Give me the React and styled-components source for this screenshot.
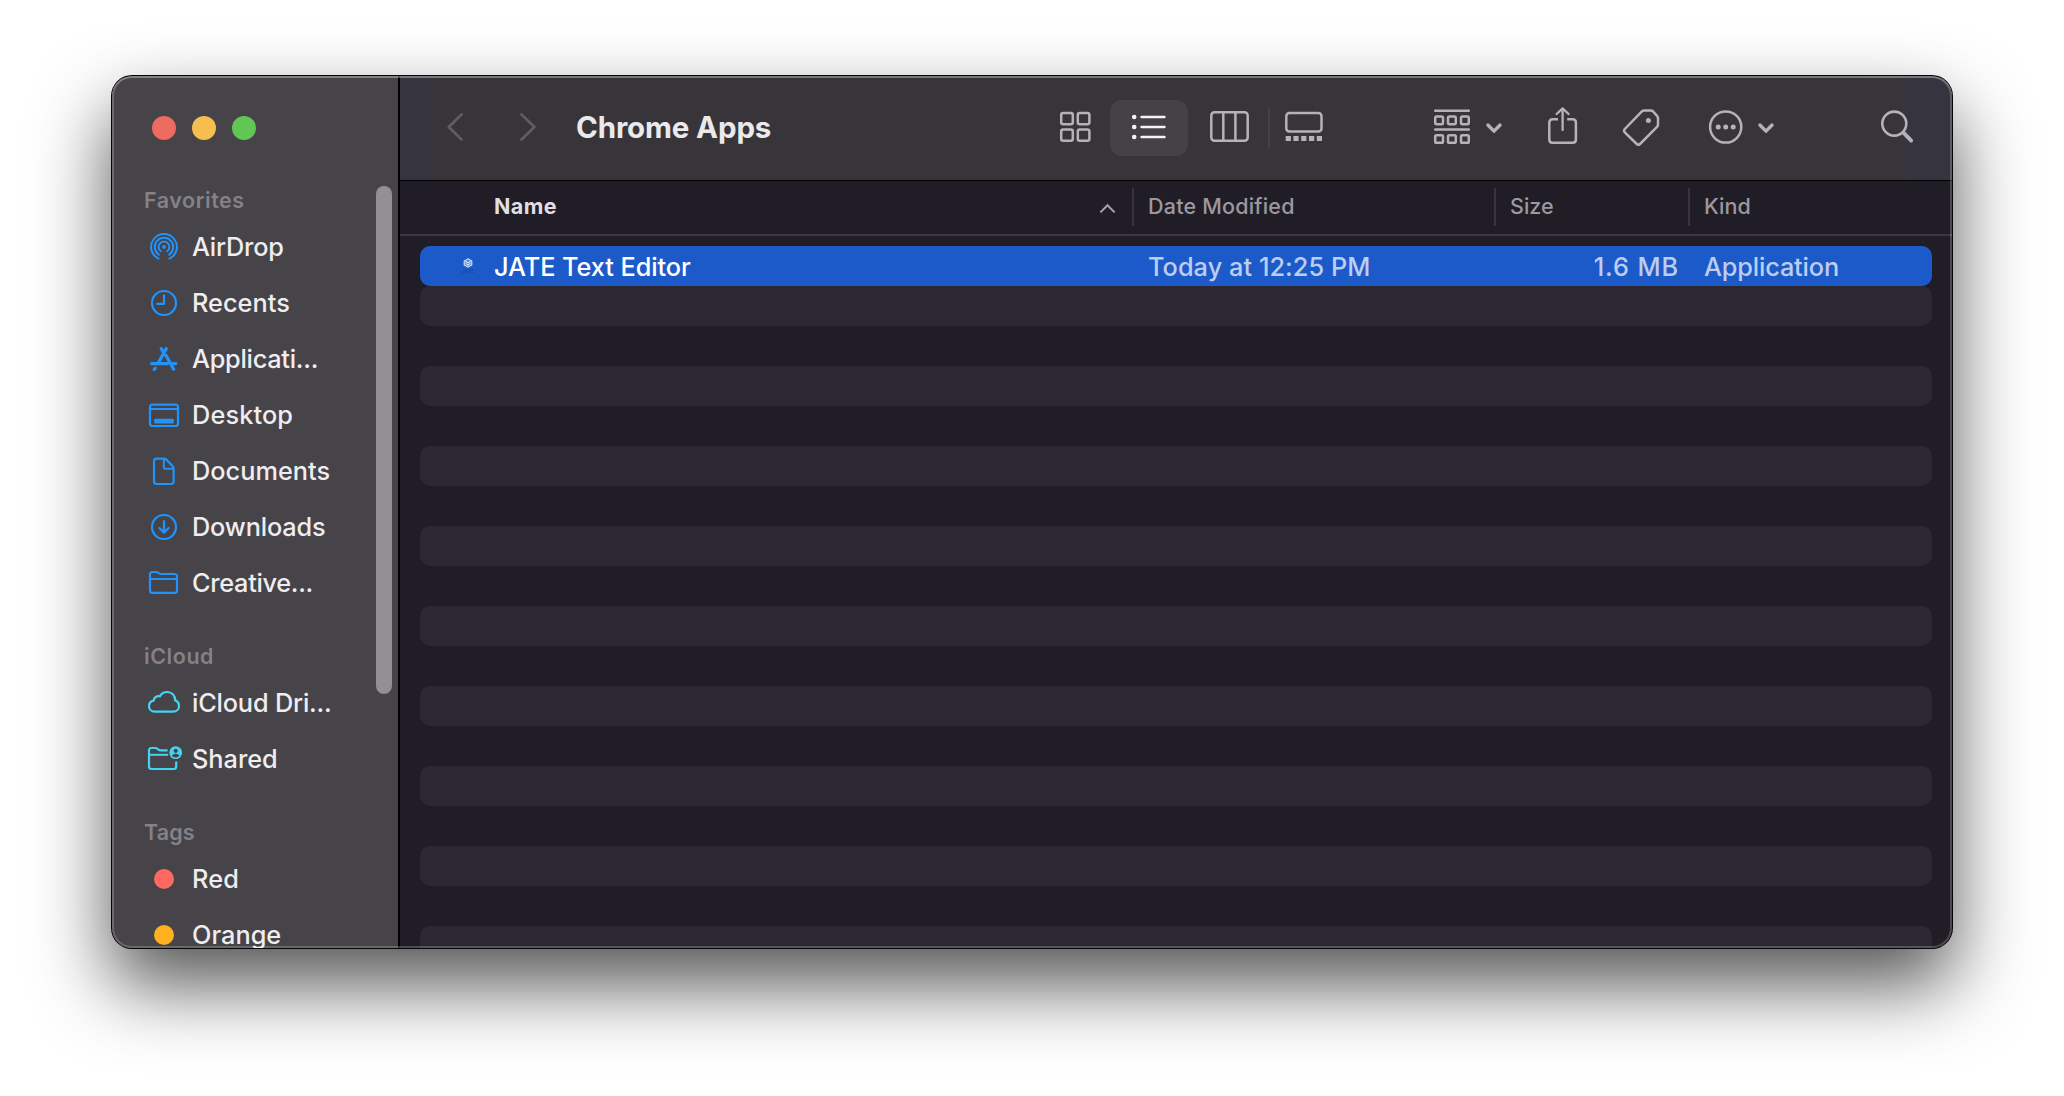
import React from 'react';
import styled, { createGlobalStyle, css } from 'styled-components';

const GlobalStyle = createGlobalStyle`
  * { box-sizing: border-box; }
  body {
    margin: 0;
    background: #fff;
    font-family: Inter, "Liberation Sans", sans-serif;
    overflow: hidden;
  }
`;

const Backdrop = styled.div`
  width: 2064px;
  height: 1096px;
  padding: 76px 112px;
  background: #fff;
`;

const Window = styled.div`
  position: relative;
  display: flex;
  width: 1840px;
  height: 872px;
  border-radius: 20px;
  background: #211d27;
  box-shadow: 0 0 0 1px #050505, 0 36px 76px 1px rgba(0, 0, 0, 0.67);

  &::after {
    content: '';
    position: absolute;
    inset: 0;
    border-radius: inherit;
    box-shadow: inset 0 0 0 2px rgba(255, 255, 255, 0.2), inset 0 2px 0 rgba(255, 255, 255, 0.17);
    pointer-events: none;
  }
`;

const Sidebar = styled.aside`
  position: relative;
  width: 288px;
  flex: none;
  overflow: hidden;
  background: #464349;
  border-right: 2px solid #000;
  border-radius: 20px 0 0 20px;
`;

const TrafficLights = styled.div`
  display: flex;
  gap: 16px;
  height: 105px;
  padding: 40px 0 0 40px;
`;

const Light = styled.span`
  width: 24px;
  height: 24px;
  border-radius: 50%;
  background: ${(p) => p.$color};
`;

const Section = styled.section`
  margin-bottom: 26px;
`;

const SectionTitle = styled.h2`
  margin: 0;
  padding-left: 32px;
  font-size: 21.5px;
  font-weight: 600;
  line-height: 38px;
  letter-spacing: ${(p) => p.$tracking}px;
  color: #848187;
`;

const Item = styled.div`
  display: flex;
  align-items: center;
  gap: 10px;
  height: 56px;
  padding-left: 34px;
  font-size: 25.3px;
  font-weight: 500;
  letter-spacing: ${(p) => p.$tracking}px;
  color: #eeedef;
  white-space: nowrap;
`;

const Label = styled.span`
  padding-bottom: 2px;
`;

const ItemIcon = styled.svg`
  width: 36px;
  height: 36px;
  flex: none;
  overflow: visible;
  fill: none;
  stroke: ${(p) => p.$color};
  stroke-width: 2.2;
  stroke-linecap: round;
  stroke-linejoin: round;
  color: ${(p) => p.$color};
`;

const TagDot = styled.span`
  width: 20px;
  height: 20px;
  margin: 0 8px;
  border-radius: 50%;
  background: ${(p) => p.$color};
`;

const ScrollThumb = styled.div`
  position: absolute;
  top: 110px;
  right: 6px;
  width: 16px;
  height: 508px;
  border-radius: 8px;
  background: #928f95;
`;

const Main = styled.main`
  display: flex;
  flex-direction: column;
  flex: 1;
  overflow: hidden;
  border-radius: 0 20px 20px 0;
`;

const Toolbar = styled.header`
  display: flex;
  align-items: center;
  flex: none;
  height: 105px;
  padding: 0 39px 2px 47px;
  border-bottom: 1px solid #000;
  background: linear-gradient(90deg, #36343e 0, #36343e 31px, #38353a 33px, #38353a 1504px, #36343e 1506px);
`;

const Title = styled.h1`
  flex: 1;
  margin: 0 0 0 40px;
  font-size: 29.5px;
  font-weight: 650;
  line-height: 40px;
  letter-spacing: -0.14px;
  color: #eae9eb;
`;

const ToolIcon = styled.svg`
  width: ${(p) => p.$w}px;
  height: 40px;
  flex: none;
  margin-left: ${(p) => p.$gap || 0}px;
  overflow: visible;
  fill: none;
  stroke: ${(p) => p.$color || '#b6b3b8'};
  stroke-width: 2.5;
  stroke-linecap: round;
  stroke-linejoin: round;
  color: ${(p) => p.$color || '#b6b3b8'};
`;

const ActiveView = styled.div`
  display: flex;
  align-items: center;
  width: 78px;
  height: 56px;
  margin: 2px 0 0 19px;
  padding: 0 0 2px 22px;
  border-radius: 12px;
  background: #454247;
`;

const ToolDivider = styled.span`
  width: 2px;
  height: 40px;
  margin: 2px 0 0 18px;
  background: #454247;
`;

const columns = css`
  display: grid;
  grid-template-columns: ${(p) => (p.$inset ? 712 : 732)}px 362px 194px 1fr;
`;

const ListHeader = styled.div`
  ${columns}
  flex: none;
  height: 55px;
  padding-top: 7px;
  border-bottom: 2px solid #3a3740;
`;

const HeaderCell = styled.div`
  display: flex;
  align-items: center;
  justify-content: space-between;
  height: 38px;
  padding: 0 17px 2px ${(p) => (p.$main ? 94 : 14)}px;
  border-left: ${(p) => (p.$main ? 0 : 2)}px solid #38353c;
  font-size: 21.5px;
  font-weight: ${(p) => (p.$main ? 650 : 500)};
  letter-spacing: ${(p) => p.$tracking || 0}px;
  color: ${(p) => (p.$main ? '#e0dfe1' : '#9b999e')};
`;

const SortCaret = styled.svg`
  width: 15px;
  height: 9px;
  margin-top: 4px;
  overflow: visible;
  fill: none;
  stroke: #a7a4a9;
  stroke-width: 2;
`;

const Rows = styled.div`
  flex: 1;
  padding: 10px 20px 0;
  overflow: hidden;
`;

const Row = styled.div`
  ${columns}
  align-items: center;
  height: 40px;
  border-radius: 10px;
  background: ${(p) => (p.$selected ? '#1d5ac9' : p.$striped ? '#2c2832' : 'transparent')};
  font-size: 25.3px;
  font-weight: 500;
  color: #bccdf0;
`;

const NameCell = styled.div`
  display: flex;
  align-items: center;
  gap: 19px;
  padding-left: 41px;
  letter-spacing: -0.06px;
  color: #fff;
`;

const Cell = styled.div`
  padding: 0 ${(p) => (p.$right ? 9 : 0)}px 0 16px;
  text-align: ${(p) => (p.$right ? 'right' : 'left')};
  letter-spacing: ${(p) => p.$tracking}px;
`;

const AppBadge = styled.div`
  display: flex;
  flex-direction: column;
  align-items: center;
  width: 14px;
  gap: 2px;
  font-size: 4.5px;
  font-weight: 500;
  line-height: 4px;
  letter-spacing: 0.6px;
  color: #1c3f8c;
`;

const AppLogo = styled.svg`
  width: 10px;
  height: 10px;
  fill: #4f7fd8;
  stroke: #d6e3fa;
  stroke-width: 1.1;
`;

const BLUE = '#2094fa';
const CYAN = '#41d5f2';

const glyphs = {
  airdrop: (
    <g strokeWidth="2">
      <path d="M-5.4 11.7A12.9 12.9 0 1 1 5.4 11.7" />
      <path d="M-5.2 7.6A9.2 9.2 0 1 1 5.2 7.6" />
      <path d="M-3.2 4.3A5.4 5.4 0 1 1 3.2 4.3" />
      <circle r="1.9" fill="currentColor" stroke="none" />
    </g>
  ),
  recents: (
    <g>
      <circle r="12" />
      <path d="M0 -7.7V.8H-6.8" />
    </g>
  ),
  applications: (
    <g strokeWidth="3.2">
      <path d="M2.3 -10.4L-5.6 3.6M-2.8 -10.4L-.6 -6.8M-12.4 4.6H3.6M-8.8 9.2L-9.8 10.4M2 -3.6L9.7 10.2M9 4.6H11.8" />
    </g>
  ),
  desktop: (
    <g>
      <rect x="-14" y="-10.4" width="28" height="21.4" rx="2.4" />
      <path d="M-14 -6H14" />
      <rect x="-9.8" y="3.8" width="19.6" height="4.6" rx=".8" fill="currentColor" stroke="none" />
    </g>
  ),
  documents: (
    <g>
      <path d="M-7.6 -12.4H.2Q1.2 -12.4 2 -11.6L9 -4.4Q9.6 -3.7 9.6 -2.8V10.6Q9.6 13 7.2 13H-7.6Q-10 13 -10 10.6V-10Q-10 -12.4 -7.6 -12.4Z" />
      <path d="M-.2 -12V-3.6Q-.2 -2.2 1.2 -2.2H9.4" strokeWidth="2" />
    </g>
  ),
  downloads: (
    <g>
      <circle r="12" />
      <path d="M0 -5.8V5.4M-4.6 1L0 5.6L4.6 1" />
    </g>
  ),
  folder: (
    <g>
      <path d="M-14 7.4V-8.6Q-14 -11 -11.6 -11H-7.8Q-6.6 -11 -5.8 -10.3L-5 -9.6Q-4.2 -9 -3 -9H10.6Q13 -9 13 -6.6V7.4Q13 9.8 10.6 9.8H-11.6Q-14 9.8 -14 7.4Z" />
      <path d="M-14 -4H13" strokeWidth="2" />
    </g>
  ),
  cloud: (
    <path d="M-9.4 8.6H9.2C12.6 8.6 15 6.2 15 3C15 .2 13.4 -1.8 11.2 -2.6C11.2 -7.6 7.6 -11 3.2 -11C-.2 -11 -2.8 -9.4 -4.2 -6.6C-7.2 -7.4 -10 -5.6 -10.4 -2.4C-13.2 -1.8 -15 .4 -15 3C-15 6.2 -12.6 8.6 -9.4 8.6Z" />
  ),
  shared: (
    <g>
      <path d="M3.6 -8.6H-3.4Q-4.8 -8.6 -5.6 -9.4L-6.6 -10.2Q-7.4 -11 -8.6 -11H-12.6Q-15 -11 -15 -8.6V7.6Q-15 10 -12.6 10H9.8Q12.2 10 12.2 7.6V2.4" strokeLinecap="butt" />
      <path d="M-15 -4.2H4.2" strokeWidth="2" strokeLinecap="butt" />
      <circle cx="11.7" cy="-6.4" r="6.4" fill="currentColor" stroke="none" />
      <circle cx="11.7" cy="-8.2" r="2.1" fill="#464349" stroke="none" />
      <path d="M7.9 -3.2Q9 -5.2 11.7 -5.2Q14.4 -5.2 15.5 -3.2Q14 -1.6 11.7 -1.6Q9.4 -1.6 7.9 -3.2Z" fill="#464349" stroke="none" />
    </g>
  ),
};

const sections = [
  {
    title: 'Favorites',
    tracking: 0.54,
    items: [
      { label: 'AirDrop', icon: 'airdrop', color: BLUE, tracking: -0.2 },
      { label: 'Recents', icon: 'recents', color: BLUE, tracking: 0.04 },
      { label: 'Applicati...', icon: 'applications', color: BLUE, tracking: -0.26 },
      { label: 'Desktop', icon: 'desktop', color: BLUE, tracking: 0.14 },
      { label: 'Documents', icon: 'documents', color: BLUE, tracking: 0.02 },
      { label: 'Downloads', icon: 'downloads', color: BLUE, tracking: -0.15 },
      { label: 'Creative...', icon: 'folder', color: BLUE, tracking: -0.3 },
    ],
  },
  {
    title: 'iCloud',
    tracking: 0.55,
    items: [
      { label: 'iCloud Dri...', icon: 'cloud', color: CYAN, tracking: -0.18 },
      { label: 'Shared', icon: 'shared', color: CYAN, tracking: 0 },
    ],
  },
  {
    title: 'Tags',
    tracking: 0.1,
    items: [
      { label: 'Red', tag: '#ff6961', tracking: 0.2 },
      { label: 'Orange', tag: '#ffb020', tracking: 0 },
    ],
  },
];

const ChevronDown = ({ gap }) => (
  <ToolIcon $w={16} $gap={gap} viewBox="0 0 16 40">
    <path d="M1.9 18L8 24.2L14.1 18" strokeWidth="3.3" />
  </ToolIcon>
);

const emptyRows = Array.from({ length: 17 }, (_, i) => i % 2 === 0);

export default function App() {
  return (
    <Backdrop>
      <GlobalStyle />
      <Window>
        <Sidebar>
          <TrafficLights>
            <Light $color="#ed6b60" />
            <Light $color="#f5be4f" />
            <Light $color="#62c655" />
          </TrafficLights>
          {sections.map((s) => (
            <Section key={s.title}>
              <SectionTitle $tracking={s.tracking}>{s.title}</SectionTitle>
              {s.items.map((it) => (
                <Item key={it.label} $tracking={it.tracking}>
                  {it.tag ? (
                    <TagDot $color={it.tag} />
                  ) : (
                    <ItemIcon $color={it.color} viewBox="-18 -18 36 36">
                      {glyphs[it.icon]}
                    </ItemIcon>
                  )}
                  <Label>{it.label}</Label>
                </Item>
              ))}
            </Section>
          ))}
          <ScrollThumb />
        </Sidebar>

        <Main>
          <Toolbar>
            <ToolIcon $w={16} $color="#605d63" viewBox="0 0 16 40">
              <path d="M14.6 7.4L1.8 20L14.6 32.6" strokeWidth="2.7" />
            </ToolIcon>
            <ToolIcon $w={16} $gap={57} $color="#605d63" viewBox="0 0 16 40">
              <path d="M1.4 7.4L14.4 20L1.4 32.6" strokeWidth="2.7" />
            </ToolIcon>
            <Title>Chrome Apps</Title>

            <ToolIcon $w={31} viewBox="0 0 31 40">
              <rect x="1.2" y="5.9" width="11.6" height="11.4" rx="2" />
              <rect x="17.8" y="5.9" width="11.6" height="11.4" rx="2" />
              <rect x="1.2" y="22.4" width="11.6" height="11.4" rx="2" />
              <rect x="17.8" y="22.4" width="11.6" height="11.4" rx="2" />
            </ToolIcon>
            <ActiveView>
              <ToolIcon $w={34} $color="#f4f3f5" viewBox="0 0 34 40">
                <path d="M9.6 10H32.4M9.6 20H32.4M9.6 30H32.4" strokeWidth="2.6" />
                <g fill="currentColor" stroke="none">
                  <circle cx="2.2" cy="10" r="2.3" />
                  <circle cx="2.2" cy="20" r="2.3" />
                  <circle cx="2.2" cy="30" r="2.3" />
                </g>
              </ToolIcon>
            </ActiveView>
            <ToolIcon $w={40} $gap={22} viewBox="0 0 40 40">
              <rect x="1.3" y="5.3" width="36.4" height="28.4" rx="3.2" />
              <path d="M13.3 5.5V33.5M25.4 5.5V33.5" />
            </ToolIcon>
            <ToolDivider />
            <ToolIcon $w={38} $gap={15} viewBox="0 0 38 40">
              <rect x="1.3" y="6" width="35.2" height="18.6" rx="3" />
              <path d="M.7 29H5.9V34H.7ZM8.4 29H13.6V34H8.4ZM16.2 29H21.4V34H16.2ZM24 29H29.2V34H24ZM31.8 29H37V34H31.8Z" fill="currentColor" stroke="none" />
            </ToolIcon>

            <ToolIcon $w={36} $gap={111} viewBox="0 0 36 40">
              <path d="M1.2 3.7H34.8M1.2 22.5H34.8" />
              <rect x="1.2" y="9.6" width="7.8" height="7.6" rx="1.4" />
              <rect x="14" y="9.6" width="7.8" height="7.6" rx="1.4" />
              <rect x="27" y="9.6" width="7.8" height="7.6" rx="1.4" />
              <rect x="1.2" y="28.2" width="7.8" height="7.6" rx="1.4" />
              <rect x="14" y="28.2" width="7.8" height="7.6" rx="1.4" />
              <rect x="27" y="28.2" width="7.8" height="7.6" rx="1.4" />
            </ToolIcon>
            <ChevronDown gap={16} />

            <ToolIcon $w={30} $gap={46} viewBox="0 0 30 40">
              <path d="M10 12.3H4.6Q1.3 12.3 1.3 15.6V32.4Q1.3 35.7 4.6 35.7H24.6Q27.9 35.7 27.9 32.4V15.6Q27.9 12.3 24.6 12.3H19.2" strokeLinecap="butt" />
              <path d="M14.6 2V23M8.6 7L14.6 1.4L20.6 7" strokeWidth="2.3" />
            </ToolIcon>
            <ToolIcon $w={38} $gap={44} viewBox="0 0 38 40">
              <path d="M19.6 4.6Q20.8 3.5 22.2 3.5H28.8Q30.2 3.5 31.2 4.5L35 8.9Q36 9.9 36 11.3V17.4Q36 18.8 35 19.8L18 37Q16.4 38.6 14.8 37L3 25.6Q1.2 23.8 2.8 22Z" strokeWidth="2.5" />
              <circle cx="26.4" cy="13.5" r="2.5" fill="currentColor" stroke="none" />
            </ToolIcon>
            <ToolIcon $w={34} $gap={49} viewBox="0 0 34 40">
              <circle cx="16.7" cy="20" r="15.6" />
              <g fill="currentColor" stroke="none">
                <circle cx="9.2" cy="20" r="2.5" />
                <circle cx="16.7" cy="20" r="2.5" />
                <circle cx="24.2" cy="20" r="2.5" />
              </g>
            </ToolIcon>
            <ChevronDown gap={15} />
            <ToolIcon $w={32} $gap={107} viewBox="0 0 32 40">
              <circle cx="13.3" cy="16.6" r="12" strokeWidth="2.6" />
              <path d="M22.4 25.6L30.2 33.6" strokeWidth="3.8" />
            </ToolIcon>
          </Toolbar>

          <ListHeader>
            <HeaderCell $main $tracking={0.45}>
              Name
              <SortCaret viewBox="0 0 15 9">
                <path d="M.4 8.4L7.5 1.2L14.6 8.4" />
              </SortCaret>
            </HeaderCell>
            <HeaderCell $tracking={0.2}>Date Modified</HeaderCell>
            <HeaderCell>Size</HeaderCell>
            <HeaderCell>Kind</HeaderCell>
          </ListHeader>

          <Rows>
            <Row $selected $inset>
              <NameCell>
                <AppBadge>
                  <AppLogo viewBox="0 0 10 10">
                    <path d="M5 .8L8.8 3V7L5 9.2L1.2 7V3Z" />
                    <path d="M2.4 3.2L5 4.8L7.6 3.4M2.4 5.4L5 7L7.6 5.4" fill="none" />
                  </AppLogo>
                  JATE
                </AppBadge>
                JATE Text Editor
              </NameCell>
              <Cell $tracking={0.05}>Today at 12:25 PM</Cell>
              <Cell $right $tracking={0.9}>1.6 MB</Cell>
              <Cell $tracking={-0.15}>Application</Cell>
            </Row>
            {emptyRows.map((striped, i) => (
              <Row key={i} $striped={striped} $inset />
            ))}
          </Rows>
        </Main>
      </Window>
    </Backdrop>
  );
}
